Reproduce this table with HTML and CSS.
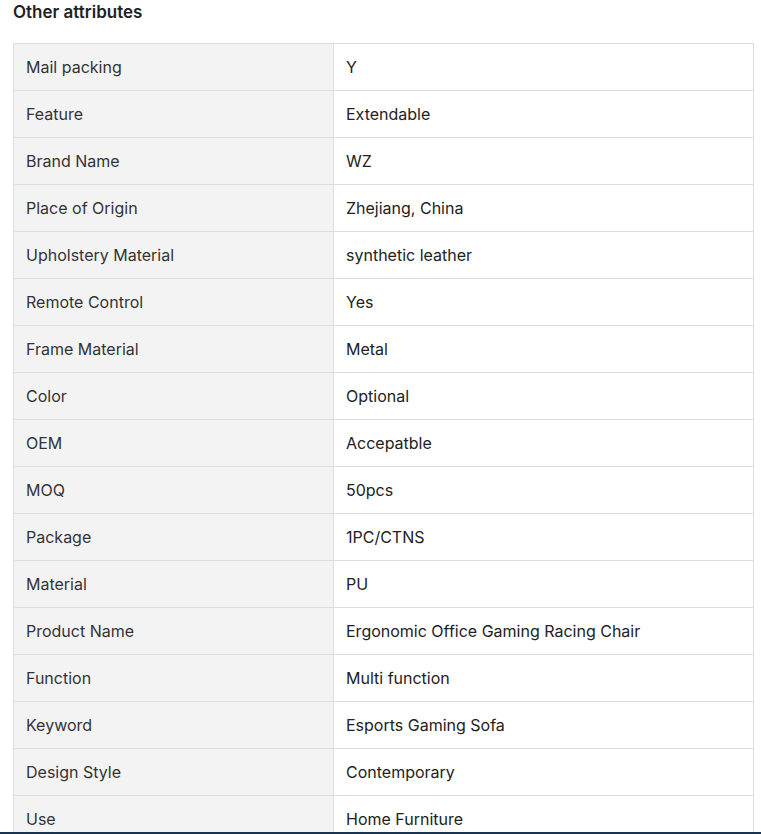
FILE: index.html
```html
<!DOCTYPE html>
<html>
<head>
<meta charset="utf-8">
<link rel="stylesheet" href="styles.css">
</head>
<body>
<div class="attrs">
  <h3 class="attrs-title">Other attributes</h3>
  <table class="attrs-table">
    <colgroup><col class="col-key"><col class="col-val"></colgroup>
    <tbody>
      <tr><td class="key">Mail packing</td><td class="val">Y</td></tr>
      <tr><td class="key">Feature</td><td class="val">Extendable</td></tr>
      <tr><td class="key">Brand Name</td><td class="val">WZ</td></tr>
      <tr><td class="key">Place of Origin</td><td class="val">Zhejiang, China</td></tr>
      <tr><td class="key">Upholstery Material</td><td class="val">synthetic leather</td></tr>
      <tr><td class="key">Remote Control</td><td class="val">Yes</td></tr>
      <tr><td class="key">Frame Material</td><td class="val">Metal</td></tr>
      <tr><td class="key">Color</td><td class="val">Optional</td></tr>
      <tr><td class="key">OEM</td><td class="val">Accepatble</td></tr>
      <tr><td class="key">MOQ</td><td class="val">50pcs</td></tr>
      <tr><td class="key">Package</td><td class="val">1PC/CTNS</td></tr>
      <tr><td class="key">Material</td><td class="val">PU</td></tr>
      <tr><td class="key">Product Name</td><td class="val">Ergonomic Office Gaming Racing Chair</td></tr>
      <tr><td class="key">Function</td><td class="val">Multi function</td></tr>
      <tr><td class="key">Keyword</td><td class="val">Esports Gaming Sofa</td></tr>
      <tr><td class="key">Design Style</td><td class="val">Contemporary</td></tr>
      <tr><td class="key">Use</td><td class="val">Home Furniture</td></tr>
    </tbody>
  </table>
</div>
<div class="bottom-edge"></div>
</body>
</html>
```
FILE: styles.css
```css
html, body {
  margin: 0;
  padding: 0;
  background: #fff;
}
body {
  font-family: Inter, "Noto Sans", "Liberation Sans", sans-serif;
  color: #222;
  overflow: hidden;
}
.attrs {
  padding: 0 8px 0 13px;
}
.attrs-title {
  margin: 0;
  font-size: 17px;
  line-height: 24px;
  font-weight: 600;
  color: #222;
}
.attrs-table {
  margin-top: 19px;
  width: 740px;
  border-collapse: collapse;
  table-layout: fixed;
  font-size: 16px;
}
.col-key { width: 320px; }
.col-val { width: 420px; }
.attrs-table td {
  border: 1px solid #dddddd;
  height: 47px;
  padding: 0 12px;
  line-height: 20px;
  vertical-align: middle;
  box-sizing: border-box;
}
.key {
  background: #f3f3f3;
  color: #333;
}
.val {
  background: #fff;
  color: #222;
}
.bottom-edge {
  position: fixed;
  left: 0;
  right: 0;
  bottom: 0;
  height: 2px;
  background: #173450;
}
```
